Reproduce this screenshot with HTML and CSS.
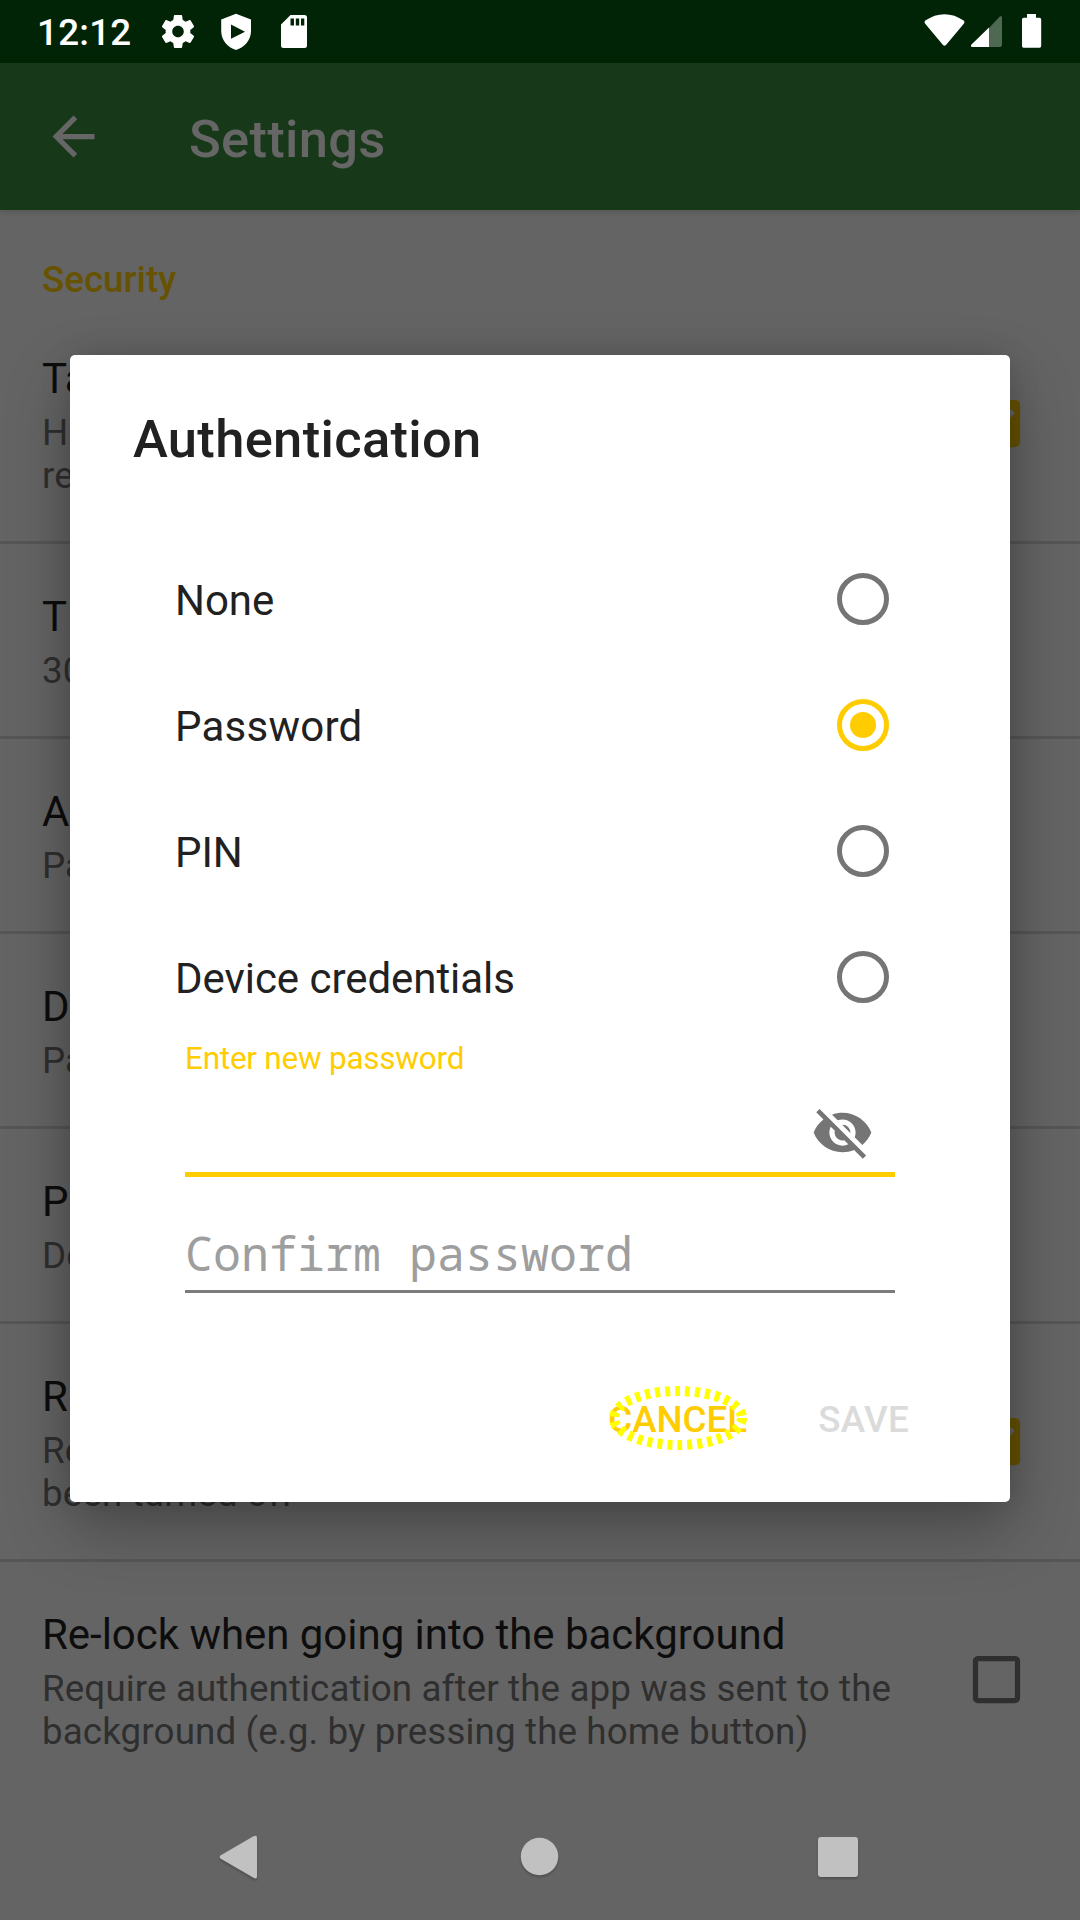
FILE: index.html
```html
<!DOCTYPE html>
<html lang="en">
<head>
<meta charset="utf-8">
<title>Settings</title>
<link rel="stylesheet" href="styles.css">
</head>
<body>
<div class="screen">
  <header class="status">
    <span class="clock">12:12</span>
    <svg class="status-left" width="160" height="63" viewBox="160 0 160 63">
      <path transform="translate(158.2 11.7) scale(1.65)" d="M19.43 12.98c.04-.32.07-.64.07-.98s-.03-.66-.07-.98l2.11-1.65c.19-.15.24-.42.12-.64l-2-3.46c-.12-.22-.39-.3-.61-.22l-2.49 1c-.52-.4-1.08-.73-1.69-.98l-.38-2.65C14.46 2.18 14.25 2 14 2h-4c-.25 0-.46.18-.49.42l-.38 2.65c-.61.25-1.17.59-1.69.98l-2.49-1c-.23-.09-.49 0-.61.22l-2 3.46c-.13.22-.07.49.12.64l2.11 1.65c-.04.32-.07.65-.07.98s.03.66.07.98l-2.11 1.65c-.19.15-.24.42-.12.64l2 3.46c.12.22.39.3.61.22l2.49-1c.52.4 1.08.73 1.69.98l.38 2.65c.03.24.24.42.49.42h4c.25 0 .46-.18.49-.42l.38-2.65c.61-.25 1.17-.59 1.69-.98l2.49 1c.23.09.49 0 .61-.22l2-3.46c.12-.22.07-.49-.12-.64l-2.11-1.65zM12 15.5c-1.93 0-3.5-1.57-3.5-3.5s1.57-3.500 3.500-3.500 3.500 1.570 3.500 3.500-1.570 3.500-3.500 3.500z"/>
      <path fill-rule="evenodd" d="M236 13.700L251 19.500V31C251 40 244.500 47.500 236 50C227.500 47.500 221.200 40 221.200 31V19.500ZM231 24.600V38.700L245 31.700Z"/>
      <path fill-rule="evenodd" d="M290.500 15H304.500Q307 15 307 17.500V45.500Q307 48 304.500 48H283.500Q281 48 281 45.500V24.500ZM290.500 18.500V25.500H294V18.500ZM295.800 18.500V25.500H299.200V18.500ZM301 18.500V25.500H304.300V18.500Z"/>
    </svg>
    <svg class="status-right" width="130" height="63" viewBox="920 0 130 63">
      <path d="M925 23.500Q923.700 22 925.300 20.600C937 12 952 12 963.700 20.600Q965.300 22 964 23.500L946 45Q944.500 46.500 943 45Z"/>
      <path class="faint" d="M989 28L999.800 16.600Q1002 15 1002 17.500V44.500Q1002 47 999.500 47H989Z"/>
      <path d="M989 27.500V47H972.500Q970 47 971.500 44.500Z"/>
      <path d="M1027 14H1036V17.700H1039.500Q1041.200 17.700 1041.200 19.500V46Q1041.200 47.800 1039.500 47.800H1023.700Q1022 47.800 1022 46V19.500Q1022 17.700 1023.700 17.700H1027Z"/>
    </svg>
  </header>
  <div class="toolbar">
    <svg class="back" width="63" height="63" viewBox="0 0 24 24"><path d="M20 11H7.830l5.590-5.590L12 4l-8 8 8 8 1.410-1.410L7.830 13H20v-2z"/></svg>
    <h1>Settings</h1>
  </div>
  <main class="settings">
    <h2>Security</h2>
    <section class="row">
      <div class="text"><p class="name">Ta</p><p class="note">H<br>re</p></div>
      <svg class="check on" width="63" height="63" viewBox="0 0 24 24"><path d="M19 3H5c-1.110 0-2 .9-2 2v14c0 1.100.890 2 2 2h14c1.110 0 2-.9 2-2V5c0-1.100-.890-2-2-2zm-9 14l-5-5 1.410-1.410L10 14.170l7.590-7.590L19 8l-9 9z"/></svg>
    </section>
    <section class="row"><div class="text"><p class="name">T</p><p class="note">30</p></div></section>
    <section class="row"><div class="text"><p class="name">A</p><p class="note">Pa</p></div></section>
    <section class="row"><div class="text"><p class="name">D</p><p class="note">Pa</p></div></section>
    <section class="row"><div class="text"><p class="name">P</p><p class="note">De</p></div></section>
    <section class="row">
      <div class="text"><p class="name">R</p><p class="note">Re<br>been turned off</p></div>
      <svg class="check on" width="63" height="63" viewBox="0 0 24 24"><path d="M19 3H5c-1.110 0-2 .9-2 2v14c0 1.100.890 2 2 2h14c1.110 0 2-.9 2-2V5c0-1.100-.890-2-2-2zm-9 14l-5-5 1.410-1.410L10 14.170l7.590-7.590L19 8l-9 9z"/></svg>
    </section>
    <section class="row last">
      <div class="text"><p class="name">Re-lock when going into the background</p><p class="note">Require authentication after the app was sent to the<br>background (e.g. by pressing the home button)</p></div>
      <svg class="check" width="63" height="63" viewBox="0 0 24 24"><path d="M19 5v14H5V5h14m0-2H5c-1.100 0-2 .9-2 2v14c0 1.100.9 2 2 2h14c1.100 0 2-.9 2-2V5c0-1.100-.9-2-2-2z"/></svg>
    </section>
  </main>
  <nav class="navbar">
    <svg width="44" height="50" viewBox="216 1832 44 50"><path d="M253.500 1836.300Q257 1834.600 257 1838V1876.200Q257 1879.500 253.500 1877.800L220.800 1858.700Q218.600 1857 220.800 1855.300Z"/></svg>
    <svg width="44" height="50" viewBox="516 1832 44 50"><circle cx="539.500" cy="1856.500" r="18.700"/></svg>
    <svg width="44" height="50" viewBox="816 1832 44 50"><rect x="818" y="1837" width="40" height="40" rx="3"/></svg>
  </nav>

  <div class="dialog" role="dialog">
    <h3>Authentication</h3>
    <div class="options">
      <div class="option"><span>None</span><i class="radio"></i></div>
      <div class="option chosen"><span>Password</span><i class="radio"></i></div>
      <div class="option"><span>PIN</span><i class="radio"></i></div>
      <div class="option"><span>Device credentials</span><i class="radio"></i></div>
    </div>
    <div class="fields">
      <div class="field active">
        <label>Enter new password</label>
        <svg class="eye" width="63" height="63" viewBox="0 0 24 24"><path d="M12 7c2.760 0 5 2.240 5 5 0 .65-.13 1.260-.36 1.830l2.920 2.920c1.510-1.260 2.700-2.890 3.430-4.750-1.730-4.390-6-7.500-11-7.500-1.400 0-2.740.25-3.980.7l2.160 2.160C10.740 7.130 11.350 7 12 7zM2 4.270l2.280 2.280.46.46C3.080 8.300 1.780 10.020 1 12c1.730 4.390 6 7.500 11 7.500 1.550 0 3.030-.3 4.380-.84l.42.42L19.730 22 21 20.730 3.270 3 2 4.270zM7.530 9.800l1.550 1.550c-.05.21-.08.43-.08.65 0 1.660 1.340 3 3 3 .22 0 .44-.03.65-.08l1.550 1.550c-.67.33-1.410.53-2.200.53-2.760 0-5-2.240-5-5 0-.79.2-1.530.53-2.200zm4.310-.78l3.150 3.150.02-.16c0-1.660-1.340-3-3-3l-.17.01z"/></svg>
      </div>
      <div class="field idle"><span class="hint">Confirm password</span></div>
    </div>
    <div class="actions">
      <span class="cancel">CANCEL
        <svg class="focus" width="150" height="76" viewBox="603 1380 150 76"><ellipse cx="678" cy="1418" rx="64" ry="27"/></svg>
      </span>
      <span class="save">SAVE</span>
    </div>
  </div>
</div>
</body>
</html>
```

FILE: styles.css
```css
* { box-sizing: border-box; margin: 0; padding: 0; }
body { width: 1080px; height: 1920px; overflow: hidden; background: #646464; font-family: Roboto, sans-serif; white-space: nowrap; }
svg, i { display: block; flex: none; }

.screen { position: relative; display: flex; flex-direction: column; width: 1080px; height: 1920px; background: #646464; }

.status { display: flex; height: 63px; background: #002405; color: #fff; }
.clock { width: 160px; padding: 11px 0 0 37px; font-size: 36.75px; font-weight: 500; line-height: 43px; letter-spacing: .25px; }
.status svg { fill: #fff; }
.status-right { margin-left: auto; margin-right: 30px; }
.status .faint { fill: #4f6851; }

.toolbar { z-index: 1; display: flex; align-items: center; gap: 84px; height: 147px; padding-left: 42px; background: #183919; box-shadow: 0 2px 6px rgba(0, 0, 0, .14); }
.back { fill: #666; margin-top: -1px; }
h1 { margin-top: 5px; font-size: 52.5px; font-weight: 500; line-height: 62px; letter-spacing: .3px; color: #666; }

.settings { height: 1587px; }
h2 { height: 96px; padding: 48px 42px 0; font-size: 36.75px; font-weight: 500; line-height: 43px; color: #665200; }
.row { display: flex; align-items: center; justify-content: space-between; padding: 0 29px 0 42px; border-bottom: 3px solid #565656; }
.row.last { border-bottom: 0; }
.text { padding: 48px 0 44px; }
.name { margin-bottom: 8px; font-size: 42px; line-height: 49px; letter-spacing: -.03px; color: #0d0d0d; }
.note { font-size: 36.75px; line-height: 43px; letter-spacing: .12px; color: #2f2f2f; }
.check { margin-right: 23.5px; fill: #2f2f2f; }
.check.on { fill: #665200; }

.navbar { display: flex; justify-content: space-between; height: 123px; padding: 35px 220px 0 216px; }
.navbar svg { fill: #c1c1c1; filter: drop-shadow(0 2px 1px rgba(0, 0, 0, .2)); }

.dialog { position: absolute; left: 70px; top: 355px; display: flex; flex-direction: column; width: 940px; height: 1147px; border-radius: 5px; background: #fff; box-shadow: 0 26px 64px rgba(0, 0, 0, .28), 0 0 30px rgba(0, 0, 0, .12); }
h3 { height: 181px; padding: 53px 63px 0; font-size: 52.5px; font-weight: 500; line-height: 62px; letter-spacing: .32px; color: #212121; }
.option { display: flex; align-items: center; justify-content: space-between; height: 126px; padding: 0 121px 0 105px; }
.option span { padding-top: 3px; font-size: 42px; line-height: 49px; letter-spacing: -.05px; color: #212121; }
.option.chosen span { letter-spacing: .25px; }
.radio { width: 52.5px; height: 52.5px; border: 5.25px solid #757575; border-radius: 50%; }
.chosen .radio { display: grid; place-items: center; border-color: #fc0; }
.chosen .radio::before { content: ""; width: 26px; height: 26px; border-radius: 50%; background: #fc0; }

.fields { padding: 0 115px; }
.field { display: flex; flex-direction: column; }
.field.active { height: 137px; border-bottom: 5px solid #fc0; }
.field label { height: 61px; font-size: 31.5px; line-height: 37px; letter-spacing: -.24px; color: #fc0; }
.eye { align-self: flex-end; margin-right: 21px; fill: #757575; }
.field.idle { height: 116px; padding-top: 48px; border-bottom: 3px solid #7b7b7b; }
.hint { font-family: "Noto Sans Mono", "DejaVu Sans Mono", monospace; font-size: 46.6px; line-height: 56px; letter-spacing: .04px; color: #9e9e9e; }

.actions { display: flex; justify-content: flex-end; gap: 71px; padding: 105px 101px 0 0; font-size: 36.75px; font-weight: 500; line-height: 43px; }
.cancel { position: relative; color: #fc0; }
.save { letter-spacing: .3px; color: #dbdbdb; }
.focus { position: absolute; left: -5px; top: -18px; fill: none; stroke: #ff0; stroke-width: 10; stroke-dasharray: 5 5; }
```
